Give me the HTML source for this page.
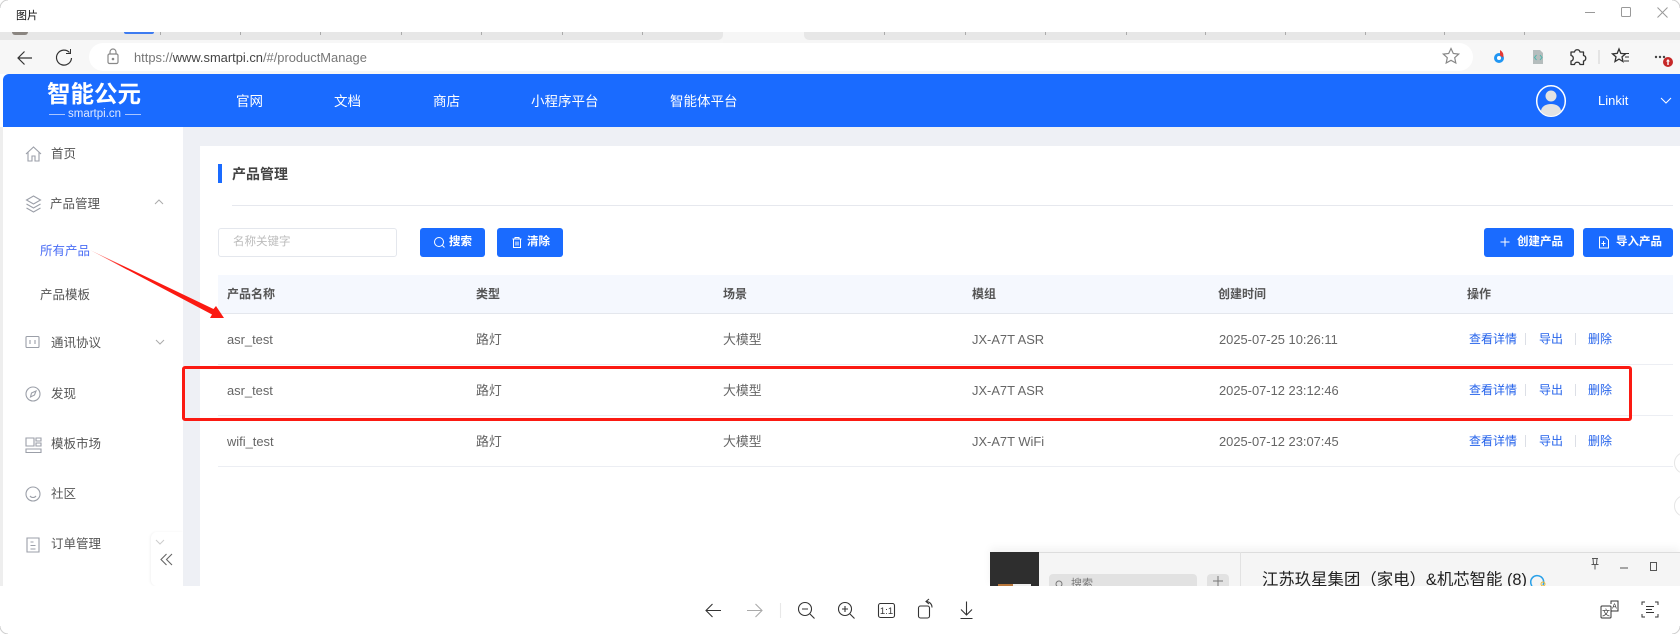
<!DOCTYPE html>
<html lang="zh"><head><meta charset="utf-8"><title>图片</title>
<style>
html,body{margin:0;padding:0;background:#fff}
body{width:1680px;height:634px;position:relative;overflow:hidden;font-family:"Liberation Sans","Noto Sans CJK SC",sans-serif;color:#555}
.a,.t{position:absolute}
.t{white-space:nowrap;line-height:20px;transform:translateY(-10px)}
svg{position:absolute;overflow:visible}
.s{font-size:12.5px;color:#555}
.h{font-size:12px;color:#555;font-weight:700}
.c{font-size:12.9px;color:#666}
.l{font-size:12px;color:#2563eb}
.nav{font-size:13.5px;color:#fff}
.btn{position:absolute;background:#1a6bff;border-radius:3px;height:29px;top:228px}
.bt{font-size:11.5px;color:#fff;font-weight:700}
.sep{position:absolute;width:1px;height:12px;background:#dcdfe6}
.row{position:absolute;left:218px;width:1455px;height:1px;background:#eceef3}
</style></head><body>
<!-- title bar -->
<div class="t" style="left:16px;top:16px;font-size:11px;color:#111">图片</div>
<svg style="left:0;top:0" width="1680" height="32" fill="none" stroke="#999"><path d="M1585 12.500h10"/><rect x="1621.500" y="7.500" width="9" height="9" rx="1"/><path d="M1657.500 7.500l10 10M1667.500 7.500l-10 10"/></svg>
<!-- tab strip -->
<div class="a" style="left:0;top:32px;width:1680px;height:11px;background:#f6f6f6"></div>
<div class="a" style="left:0;top:32px;width:723px;height:8px;background:#e7e7e7;border-radius:0 0 5px 0"></div>
<div class="a" style="left:804px;top:32px;width:876px;height:8px;background:#e7e7e7;border-radius:0 0 0 5px"></div>
<div class="a" style="left:12px;top:32px;width:16px;height:3px;background:#8a8580;border-radius:0 0 8px 8px"></div>
<div class="a" style="left:124px;top:32px;width:30px;height:2px;background:#3d7bf0;border-radius:0 0 3px 3px"></div>
<svg style="left:0;top:32px" width="1680" height="4" stroke="#aaa"><path d="M160.500 0v3M240.500 0v3M320.500 0v3M401.500 0v3M481.500 0v3M562.500 0v3M642.500 0v3M884.500 0v3M965.500 0v3M1045.500 0v3M1126.500 0v3M1205.500 0v3M1285.500 0v3M1365.500 0v3M1444.500 0v3M1524.500 0v3"/></svg>
<!-- toolbar -->
<div class="a" style="left:0;top:40px;width:723px;height:34px;background:#f7f7f7"></div>
<div class="a" style="left:723px;top:43px;width:957px;height:31px;background:#f7f7f7"></div>
<div class="a" style="left:0;top:43px;width:723px;height:31px;background:#f7f7f7"></div>
<div class="a" style="left:89px;top:43px;width:1384px;height:28px;background:#fff;border-radius:14px"></div>
<svg style="left:0;top:40px" width="200" height="34" fill="none" stroke="#333" stroke-width="1.200"><path d="M32 18H18M24.500 11.500L18 18l6.500 6.500"/><path d="M69.500 12.500A7.500 7.500 0 1 0 71.500 18"/><path d="M70.500 9v4.500h-4.500" stroke-width="1"/><g stroke="#888"><rect x="108" y="14" width="10" height="9.500" rx="1.500"/><path d="M110 14v-2a3 3 0 0 1 6 0v2"/><circle cx="113" cy="19" r=".7" fill="#777"/></g></svg>
<div class="t" style="left:134px;top:58px;font-size:12.9px;color:#777">https://<span style="color:#444">www.smartpi.cn</span>/#/productManage</div>
<svg style="left:1440px;top:40px" width="240" height="34" fill="none"><path d="M11 8.500l2.300 5 5.400.6-4 3.600 1.100 5.300-4.800-2.700-4.800 2.700 1.100-5.300-4-3.600 5.400-.6z" stroke="#888" stroke-width="1.200"/>
<circle cx="59" cy="18" r="5" fill="#2196f3"/><circle cx="59" cy="18" r="2" fill="#fff"/><path d="M60 10c3 2 4 4 3 7.500l-3-2z" fill="#e53935"/>
<path d="M93 10h7l3 3v11H93z" fill="#b5bdbd"/><path d="M96.500 15l-2 2.500 2 2.500M100 15l2 2.500-2 2.500" stroke="#4db6ac" stroke-width="1"/>
<path d="M131 12h3.500a2.800 2.800 0 0 1 5.500 0h3.500v3.500a2.800 2.800 0 0 1 0 5.500V24.500H140a2.800 2.800 0 0 0-5.500 0H131V21a2.800 2.800 0 0 0 0-5.500z" stroke="#333" stroke-width="1.300" stroke-linejoin="round"/>
<path d="M159 10v14" stroke="#ddd" stroke-width="1.500"/>
<path d="M179 9l1.800 4.400 4.700.5-3.500 3 1 4.600-4-2.400-4 2.400 1-4.600-3.500-3 4.700-.5z" stroke="#333" stroke-width="1.300"/><path d="M184 13.500h5M185 17h4M184 21h5" stroke="#333"/>
<circle cx="216" cy="17" r="1.200" fill="#444"/><circle cx="220" cy="17" r="1.200" fill="#444"/><circle cx="224" cy="17" r="1.200" fill="#444"/></svg>
<svg style="left:1660px;top:55px" width="20" height="20"><circle cx="8" cy="7" r="5" fill="#c62828"/><path d="M8 4l-2 2.500h1.300V10h1.400V6.500H10z" fill="#fff"/></svg>
<!-- header -->
<div class="a" style="left:3px;top:74px;width:1677px;height:53px;background:#1a6bff;border-radius:6px 0 0 0"></div>
<div class="t" style="left:47px;top:94px;font-size:23.500px;font-weight:700;color:#fff">智能公元</div>
<div class="a" style="left:49px;top:114px;width:16px;height:1px;background:#a9c5ff"></div>
<div class="a" style="left:125px;top:114px;width:16px;height:1px;background:#a9c5ff"></div>
<div class="t" style="left:68px;top:113.500px;font-size:11.500px;color:#dfe9ff">smartpi.cn</div>
<div class="t nav" style="left:236px;top:102px">官网</div>
<div class="t nav" style="left:334px;top:102px">文档</div>
<div class="t nav" style="left:433px;top:102px">商店</div>
<div class="t nav" style="left:531px;top:102px">小程序平台</div>
<div class="t nav" style="left:670px;top:102px">智能体平台</div>
<svg style="left:1535px;top:84px" width="32" height="34"><defs><clipPath id="av"><ellipse cx="16" cy="17" rx="14" ry="15"/></clipPath></defs><ellipse cx="16" cy="17" rx="14.300" ry="15.300" fill="#1a6bff" stroke="#fff" stroke-width="1.500"/><g clip-path="url(#av)" fill="#e3e3e3"><circle cx="16" cy="12" r="5.500"/><ellipse cx="16" cy="27" rx="10" ry="7"/></g></svg>
<div class="t" style="left:1598px;top:101px;font-size:13px;color:#fff">Linkit</div>
<svg style="left:1660px;top:97px" width="12" height="8" fill="none" stroke="#fff"><path d="M1 1l5 5 5-5"/></svg>
<!-- body -->
<div class="a" style="left:0;top:127px;width:3px;height:459px;background:#eeeeee"></div>
<div class="a" style="left:183px;top:127px;width:1497px;height:459px;background:#eef0f5"></div>
<div class="a" style="left:200px;top:146px;width:1480px;height:440px;background:#fff"></div>
<!-- sidebar -->
<svg style="left:24px;top:140px" width="20" height="420" fill="none" stroke="#9b9fa8" stroke-width="1.100">
<path d="M2 14l7.500-7 7.500 7M4 12v9h4v-5h3v5h4v-9"/>
<path d="M9.500 56l7 4-7 4-7-4zM2.500 64l7 4 7-4M2.500 68l7 4 7-4"/>
<rect x="2" y="196.500" width="13" height="11" rx="1"/><path d="M6 200v4M11 200v4"/>
<circle cx="9" cy="254" r="7"/><path d="M12 251l-4.500 2-1 4 4-2z"/>
<path d="M2 298h8v8H2zM12 298h5v3h-5zM12 303h5v3h-5zM2 309h15v3.500H2z"/>
<circle cx="9" cy="354" r="7"/><path d="M6 356c1.500 2 4.500 2 6 0"/>
<path d="M3 398h12v14H3zM6.500 402h3M6.500 405.500h5M6.500 409h5"/></svg>
<div class="t s" style="left:51px;top:154px">首页</div>
<div class="t s" style="left:50px;top:204px">产品管理</div>
<svg style="left:154px;top:199px" width="10" height="6" fill="none" stroke="#aaa"><path d="M1 5l4-4 4 4"/></svg>
<div class="t s" style="left:40px;top:251px;color:#4a6df5">所有产品</div>
<div class="t s" style="left:40px;top:295px">产品模板</div>
<div class="t s" style="left:51px;top:343px">通讯协议</div>
<svg style="left:155px;top:339px" width="10" height="6" fill="none" stroke="#aaa"><path d="M1 1l4 4 4-4"/></svg>
<div class="t s" style="left:51px;top:394px">发现</div>
<div class="t s" style="left:51px;top:444px">模板市场</div>
<div class="t s" style="left:51px;top:494px">社区</div>
<div class="t s" style="left:51px;top:544px">订单管理</div>
<div class="a" style="left:151px;top:532px;width:32px;height:54px;background:#fff;border-radius:6px 0 0 6px;box-shadow:-1px 0 2px rgba(0,0,0,.05)"></div>
<svg style="left:160px;top:553px" width="14" height="14" fill="none" stroke="#666" stroke-width="1.100"><path d="M6.500 1L1 6.500 6.500 12M12 1L6.500 6.500 12 12"/></svg>
<svg style="left:155px;top:539px" width="10" height="6" fill="none" stroke="#ccc"><path d="M1 1l4 4 4-4"/></svg>
<!-- content heading -->
<div class="a" style="left:218px;top:164px;width:4px;height:19px;background:#1a6bff"></div>
<div class="t" style="left:232px;top:174px;font-size:14px;font-weight:700;color:#444">产品管理</div>
<div class="a" style="left:232px;top:205px;width:1441px;height:1px;background:#e6e8ee"></div>
<!-- filters -->
<div class="a" style="left:218px;top:228px;width:177px;height:27px;border:1px solid #e4e7ed;border-radius:3px"></div>
<div class="t" style="left:233px;top:242px;font-size:11.500px;color:#bcbcbc">名称关键字</div>
<div class="btn" style="left:420px;width:65px"></div>
<svg style="left:433px;top:236px" width="13" height="13" fill="none" stroke="#fff"><circle cx="6" cy="6" r="4.500"/><path d="M9.500 9.500l2 2"/></svg>
<div class="t bt" style="left:449px;top:242px">搜索</div>
<div class="btn" style="left:497px;width:66px"></div>
<svg style="left:511px;top:236px" width="13" height="13" fill="none" stroke="#fff"><path d="M1.500 3h9M4 3V1.500h4V3M2.500 3v8.500h7V3M5 5.500v4M7 5.500v4"/></svg>
<div class="t bt" style="left:527px;top:242px">清除</div>
<div class="btn" style="left:1484px;width:90px"></div>
<svg style="left:1499px;top:236px" width="13" height="13" fill="none" stroke="#fff"><path d="M6 1.500v9M1.500 6h9"/></svg>
<div class="t bt" style="left:1517px;top:242px">创建产品</div>
<div class="btn" style="left:1583px;width:90px"></div>
<svg style="left:1598px;top:236px" width="13" height="13" fill="none" stroke="#fff"><path d="M1.500 1h6l3 3v8h-9zM5.500 5v5M3.500 7.500h4"/></svg>
<div class="t bt" style="left:1616px;top:242px">导入产品</div>
<!-- table -->
<div class="a" style="left:218px;top:275px;width:1455px;height:38px;background:#f5f8fe"></div>
<div class="row" style="top:313px;background:#e4e7ed"></div>
<div class="row" style="top:364px"></div>
<div class="row" style="top:415px"></div>
<div class="row" style="top:466px"></div>
<div class="t h" style="left:227px;top:294px">产品名称</div>
<div class="t h" style="left:476px;top:294px">类型</div>
<div class="t h" style="left:723px;top:294px">场景</div>
<div class="t h" style="left:972px;top:294px">模组</div>
<div class="t h" style="left:1218px;top:294px">创建时间</div>
<div class="t h" style="left:1467px;top:294px">操作</div>

<div class="t c" style="left:227px;top:340px">asr_test</div>
<div class="t c" style="left:476px;top:340px">路灯</div>
<div class="t c" style="left:723px;top:340px">大模型</div>
<div class="t c" style="left:972px;top:340px">JX-A7T ASR</div>
<div class="t c" style="left:1219px;top:340px">2025-07-25 10:26:11</div>
<div class="t l" style="left:1469px;top:339px">查看详情</div><div class="sep" style="left:1525px;top:333px"></div>
<div class="t l" style="left:1539px;top:339px">导出</div><div class="sep" style="left:1575px;top:333px"></div>
<div class="t l" style="left:1588px;top:339px">删除</div>

<div class="t c" style="left:227px;top:391px">asr_test</div>
<div class="t c" style="left:476px;top:391px">路灯</div>
<div class="t c" style="left:723px;top:391px">大模型</div>
<div class="t c" style="left:972px;top:391px">JX-A7T ASR</div>
<div class="t c" style="left:1219px;top:391px">2025-07-12 23:12:46</div>
<div class="t l" style="left:1469px;top:390px">查看详情</div><div class="sep" style="left:1525px;top:384px"></div>
<div class="t l" style="left:1539px;top:390px">导出</div><div class="sep" style="left:1575px;top:384px"></div>
<div class="t l" style="left:1588px;top:390px">删除</div>

<div class="t c" style="left:227px;top:442px">wifi_test</div>
<div class="t c" style="left:476px;top:442px">路灯</div>
<div class="t c" style="left:723px;top:442px">大模型</div>
<div class="t c" style="left:972px;top:442px">JX-A7T WiFi</div>
<div class="t c" style="left:1219px;top:442px">2025-07-12 23:07:45</div>
<div class="t l" style="left:1469px;top:441px">查看详情</div><div class="sep" style="left:1525px;top:435px"></div>
<div class="t l" style="left:1539px;top:441px">导出</div><div class="sep" style="left:1575px;top:435px"></div>
<div class="t l" style="left:1588px;top:441px">删除</div>

<!-- annotations -->
<div class="a" style="left:182px;top:366px;width:1444px;height:49px;border:3px solid #fb1a12;border-radius:3px"></div>
<svg style="left:0;top:0" width="400" height="400"><defs><linearGradient id="ar" x1="90" y1="251" x2="224" y2="318" gradientUnits="userSpaceOnUse"><stop offset="0" stop-color="#fb1a12" stop-opacity=".35"/><stop offset=".25" stop-color="#fb1a12"/></linearGradient></defs><path d="M90 250L213.500 309 216 306 224 318 210 318 212 314.500z" fill="url(#ar)"/></svg>
<!-- edge circles -->
<div class="a" style="left:1674px;top:452px;width:20px;height:20px;border:1px solid #e5e5e5;border-radius:50%;background:#fff"></div>
<div class="a" style="left:1674px;top:495px;width:20px;height:20px;border:1px solid #e5e5e5;border-radius:50%;background:#fff"></div>
<!-- overlapping chat window -->
<div class="a" style="left:990px;top:552px;width:690px;height:34px;background:#f5f5f5;border-top:1px solid #ddd;box-shadow:0 -4px 8px rgba(0,0,0,.05)"></div>
<div class="a" style="left:990px;top:552px;width:49px;height:34px;background:#2e2e2e"></div>
<div class="a" style="left:998px;top:584px;width:15px;height:2px;background:#b8763a"></div>
<div class="a" style="left:1013px;top:584px;width:18px;height:2px;background:#eee"></div>
<div class="a" style="left:1240px;top:552px;width:1px;height:34px;background:#e2e2e2"></div>
<div class="a" style="left:1049px;top:574px;width:148px;height:12px;background:#e2e2e2;border-radius:4px 4px 0 0"></div>
<div class="t" style="left:1071px;top:584px;font-size:11px;color:#777">搜索</div>
<div class="a" style="left:1207px;top:574px;width:22px;height:12px;background:#e2e2e2;border-radius:4px 4px 0 0"></div>
<svg style="left:1000px;top:555px" width="670" height="31" fill="none" stroke="#555"><path d="M218 31v-10M213 26h10" stroke="#777"/><circle cx="59" cy="29" r="3" stroke="#777"/><path d="M592 3.500h6M593 3.500l.5 6h3l.5-6M591.500 9.500h7M595 9.500v5"/><path d="M620 13h8"/><rect x="650.500" y="7.500" width="6" height="8"/><path d="M532 31a6.500 6.500 0 1 1 11 -1" stroke="#29a0e8" stroke-width="1.500"/><circle cx="543" cy="29" r="2" stroke="#e8b93a"/></svg>
<div class="t" style="left:1262px;top:580px;font-size:16.400px;color:#222">江苏玖星集团（家电）&amp;机芯智能 (8)</div>
<!-- bottom -->
<div class="a" style="left:0;top:586px;width:1680px;height:48px;background:#fff"></div>
<svg style="left:700px;top:595px" width="290" height="30" fill="none" stroke="#333" stroke-width="1.100">
<path d="M21 15.500H6M12.500 9L6 15.500l6.500 6.500"/>
<path d="M47 15.500h15M55.500 9l6.500 6.500-6.500 6.500" stroke="#aaa"/>
<path d="M80.500 8v15" stroke="#e8e8e8"/>
<circle cx="105" cy="14" r="6.500"/><path d="M110 19l4.500 4.500M102 14h6"/>
<circle cx="145" cy="14" r="6.500"/><path d="M150 19l4.500 4.500M142 14h6M145 11v6"/>
<rect x="178.500" y="8.500" width="16" height="14" rx="2"/><text x="186.500" y="19" font-size="9.500" text-anchor="middle" fill="#333" stroke="none" font-family="Liberation Sans">1:1</text>
<rect x="218.500" y="11" width="11" height="12" rx="2"/><path d="M226 6.500c3.500 0 6 2.500 6 6M229 4l-3 2.500 3 2.500"/>
<path d="M266.500 6.500v13M261 14.500l5.500 5.500 5.500-5.500M260.500 23.500h12"/></svg>
<svg style="left:1600px;top:598px" width="66" height="24" fill="none" stroke="#333" stroke-width="1"><rect x="1" y="8" width="10" height="12" rx="1"/><text x="6" y="17.500" font-size="8" text-anchor="middle" fill="#333" stroke="none" font-family="Noto Sans CJK SC">文</text><path d="M11 6V3h7v10h-7"/><text x="14.500" y="10.500" font-size="7" text-anchor="middle" fill="#333" stroke="none" font-family="Liberation Sans">A</text><path d="M42 7V4h3M55 4h3v3M42 16v3h3M58 16v3h-3M46 8.500h8M46 11.500h6M46 14.500h8"/></svg>
<!-- window corners -->
<svg style="left:0;top:0" width="1680" height="634" fill="none" stroke="#cfcfcf"><path d="M0 8A8 8 0 0 1 8 0M1672 0a8 8 0 0 1 8 8M0 626a8 8 0 0 0 8 8M1680 626a8 8 0 0 1-8 8"/></svg>
</body></html>
